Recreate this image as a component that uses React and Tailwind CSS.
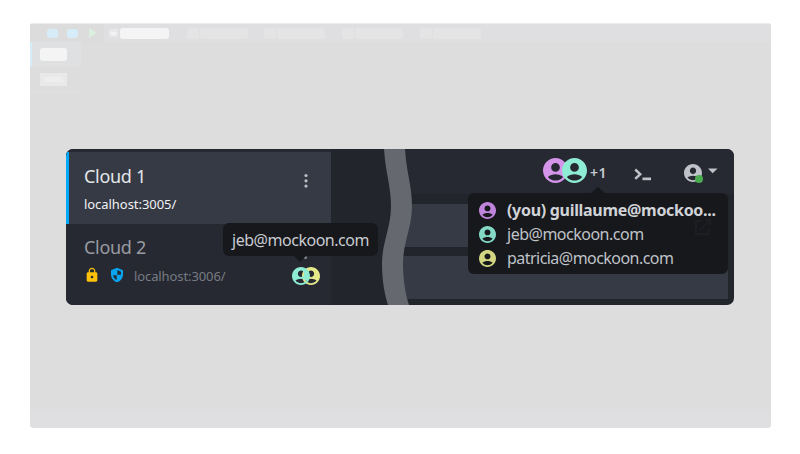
import React from 'react';

const SANS = "font-['Noto_Sans','Open_Sans',sans-serif]";

function Avatar({ size, className = '' }) {
  return (
    <svg width={size} height={size} viewBox="2 2 20 20" fill="currentColor" className={`block shrink-0 ${className}`}>
      <path d="M12 2C6.48 2 2 6.48 2 12s4.48 10 10 10 10-4.48 10-10S17.52 2 12 2zm0 4c1.93 0 3.5 1.57 3.5 3.5S13.93 13 12 13s-3.5-1.57-3.5-3.5S10.07 6 12 6zm0 14c-2.03 0-4.43-.82-6.14-2.88C7.55 15.8 9.68 15 12 15s4.45.8 6.14 2.12C16.43 19.18 14.03 20 12 20z" />
    </svg>
  );
}

function GhostTab({ className = '' }) {
  return (
    <div className={`flex gap-px ${className}`}>
      <div className="h-[11px] w-3 rounded-[3px] bg-[#e4e4e4]" />
      <div className="h-[11px] w-12 rounded-[3px] bg-[#e4e4e4]" />
    </div>
  );
}

function Backdrop() {
  return (
    <div className="flex h-[405px] w-[741px] flex-col overflow-hidden rounded bg-[#dddddd]">
      <div className="flex h-[19px] shrink-0 items-center border-t border-[#ececec] bg-[#dfdfe1]">
        <div className="flex h-full w-[74px] items-center gap-[9px] bg-[#dcdcdc] pl-[17px]">
          <div className="h-[9px] w-[11px] rounded-[3px] bg-[#d6edf9]" />
          <div className="h-[9px] w-[11px] rounded-[3px] bg-[#d6edf9]" />
          <svg width="8" height="10" viewBox="0 0 8 10" className="ml-[2px] shrink-0">
            <path d="M0 0L8 5L0 10Z" fill="#dceede" />
          </svg>
        </div>
        <div className="flex h-full w-[74px] items-center gap-[2px] pl-[5px]">
          <div className="flex h-2 w-[9px] items-center justify-center bg-[#e8e8e8]">
            <div className="h-[3px] w-[5px] bg-[#f3f3f3]" />
          </div>
          <div className="h-[11px] w-[49px] rounded-[3px] bg-[#f4f4f4]" />
        </div>
        <GhostTab className="ml-[9px]" />
        <GhostTab className="ml-[16px]" />
        <GhostTab className="ml-[17px]" />
        <GhostTab className="ml-[17px]" />
      </div>
      <div className="flex grow flex-col">
        <div className="flex h-[25px] w-[51px] items-center border-l-2 border-[#d6edf9] bg-[#dfe0e2] pl-2">
          <div className="h-[13px] w-[27px] rounded-[3px] bg-[#f4f4f4]" />
        </div>
        <div className="flex h-[25px] w-[51px] items-center border-b border-[#e0e0e0] pl-[10px]">
          <div className="flex h-[13px] w-[27px] items-center justify-center bg-[#e9e9e9]">
            <div className="h-[5px] w-[19px] bg-[#eeeeee]" />
          </div>
        </div>
      </div>
      <div className="h-[19px] shrink-0 bg-[#dfdfe1]" />
    </div>
  );
}

function Sidebar() {
  return (
    <div className="flex w-[265px] shrink-0 flex-col bg-[#262932] pt-[3px]">
      <div className="flex h-[72px] shrink-0 border-l-[3px] border-[#00a8f8] bg-[#363a44] pl-[15px]">
        <div className="flex grow flex-col">
          <div className="mt-[12px] h-6 text-[18px] leading-6 tracking-[-0.3px] text-[#e4e6e9]">Cloud 1</div>
          <div className="mt-[7px] h-[18px] text-[13px] leading-[18px] tracking-[-0.05px] text-[#f0f1f3]">localhost:3005/</div>
        </div>
        <svg width="4" height="16" viewBox="0 0 4 16" fill="#bcbfc5" className="mr-[23.5px] mt-[21px]">
          <circle cx="2" cy="2.5" r="1.6" />
          <circle cx="2" cy="7.8" r="1.6" />
          <circle cx="2" cy="13.1" r="1.6" />
        </svg>
      </div>
      <div className="flex grow flex-col pl-[18px]">
        <div className="mt-[11px] h-6 text-[18px] leading-6 tracking-[-0.3px] text-[#989ba1]">Cloud 2</div>
        <div className="mt-[8px] flex h-[18px] items-center">
          <svg width="16" height="16" viewBox="0 0 24 24" fill="#fdc10a" className="mb-[3px] shrink-0">
            <path d="M18 8h-1V6c0-2.760-2.240-5-5-5S7 3.240 7 6v2H6c-1.100 0-2 .9-2 2v10c0 1.100.9 2 2 2h12c1.100 0 2-.9 2-2V10c0-1.100-.9-2-2-2zm-6 9c-1.100 0-2-.9-2-2s.9-2 2-2 2 .9 2 2-.9 2-2 2zm3.100-9H8.900V6c0-1.710 1.390-3.100 3.100-3.100 1.710 0 3.100 1.390 3.100 3.100v2z" />
          </svg>
          <svg width="16" height="16" viewBox="0 0 24 24" className="mb-[3px] ml-[9px] shrink-0">
            <path d="M12 1L3 5v6c0 5.550 3.840 10.740 9 12 5.160-1.260 9-6.450 9-12V5z" fill="#08a4f0" />
            <path d="M12.500 4.500L18 7V11.500H12.500zM11.500 12.500V19.600C8.500 18.300 6.600 15.700 6.100 12.500z" fill="#262932" />
          </svg>
          <div className="ml-[9px] w-[100px] text-[13px] leading-[18px] tracking-[-0.1px] text-[#777b82]">localhost:3006/</div>
          <div className="ml-[58px] flex">
            <Avatar size={18} className="relative z-10 text-[#8eecd5]" />
            <Avatar size={18} className="-ml-2 text-[#e5e98a]" />
          </div>
        </div>
      </div>
    </div>
  );
}

function Toolbar() {
  return (
    <div className="flex h-[45px] shrink-0 items-start bg-[#262932] pl-[146px]">
      <div className="mt-[9px] flex">
        <Avatar size={25} className="text-[#d394ea]" />
        <Avatar size={25} className="-ml-[6px] text-[#8eecd5]" />
      </div>
      <div className="ml-[3px] mt-[14px] w-[22px] text-[14px] font-semibold leading-5 tracking-[0.6px] text-[#c6c9ce]">+1</div>
      <svg width="19" height="14" viewBox="0 0 19 14" className="ml-[22px] mt-[19px] shrink-0">
        <path d="M1.200 1.500L6.200 6.200L1.200 10.900" fill="none" stroke="#bfc2c8" strokeWidth="2.500" />
        <rect x="8.500" y="9.500" width="8.500" height="2.700" fill="#bfc2c8" />
      </svg>
      <div className="relative ml-[31px] mt-[15px]">
        <Avatar size={18} className="text-[#bfc2c8]" />
        <div className="absolute left-[11px] top-[11px] size-2 rounded-full bg-[#49ad50]" />
      </div>
      <svg width="10" height="6" viewBox="0 0 10 6" className="ml-[6px] mt-[19px]">
        <path d="M0 .5H9.500L4.700 5.300Z" fill="#bfc2c8" />
      </svg>
    </div>
  );
}

function HostTooltip() {
  return (
    <div className="absolute left-[157px] top-[74px] flex h-[33px] w-[155px] items-center justify-center rounded-md bg-[#17181c] text-[16px] tracking-[-0.48px] text-[#c8cbd0]">
      jeb@mockoon.com
      <svg width="12" height="6" viewBox="0 0 12 6" className="absolute left-[71px] top-[33px]">
        <path d="M0 0H12L6 6Z" fill="#17181c" />
      </svg>
    </div>
  );
}

function UsersTooltip() {
  return (
    <div className="absolute left-[402px] top-[44px] flex h-[81px] w-[260px] flex-col rounded-md bg-[#17181c] pl-[11px] pt-[5px] text-[16px] text-[#bfc2c7]">
      <svg width="14" height="6" viewBox="0 0 14 6" className="absolute -top-[6px] left-[123px]">
        <path d="M0 6H14L7 0Z" fill="#17181c" />
      </svg>
      <div className="flex h-6 items-center">
        <Avatar size={17} className="text-[#c184dc]" />
        <div className="ml-[11px] whitespace-nowrap font-bold tracking-[-0.3px] text-[#d0d3d7]">(you) guillaume@mockoo...</div>
      </div>
      <div className="flex h-6 items-center">
        <Avatar size={17} className="text-[#83d9c6]" />
        <div className="ml-[11px] tracking-[-0.5px]">jeb@mockoon.com</div>
      </div>
      <div className="flex h-6 items-center">
        <Avatar size={17} className="text-[#d2d581]" />
        <div className="ml-[11px] tracking-[-0.54px]">patricia@mockoon.com</div>
      </div>
      <svg width="16" height="16" viewBox="0 0 16 16" className="absolute left-[227px] top-[26px]" fill="none" stroke="#1f2025" strokeWidth="1.500">
        <path d="M7 2H1V15H14V9M10 1H15V6M15 1L5 11" />
      </svg>
    </div>
  );
}

export default function App() {
  return (
    <div className={`relative h-[454px] w-[800px] overflow-hidden bg-white pl-[30px] pt-[23px] ${SANS}`}>
      <Backdrop />
      <div className="absolute left-[66px] top-[149px] flex h-[156px] w-[668px] overflow-hidden rounded-[7px] bg-[#22252c]">
        <Sidebar />
        <div className="w-[66px] shrink-0" />
        <div className="flex grow flex-col">
          <Toolbar />
          <div className="mr-[6px] mt-[10px] h-[43px] bg-[#363a45]" />
          <div className="mr-[6px] mt-[9px] h-[43px] bg-[#363a45]" />
        </div>
        <svg width="32" height="156" viewBox="0 0 32 156" className="absolute left-[316px] top-0">
          <path d="M2 0C3.500 24 9 37 9 57C9 79 0 93 0 115C0 132 3 147 6 156H27C24 147 21 132 21 115C21 93 30 79 30 57C30 37 24.500 24 23 0Z" fill="#666870" />
        </svg>
        <div className="absolute left-[238px] top-[107px] size-[3px] rounded-full bg-[#85888e]" />
        <HostTooltip />
        <UsersTooltip />
      </div>
    </div>
  );
}
